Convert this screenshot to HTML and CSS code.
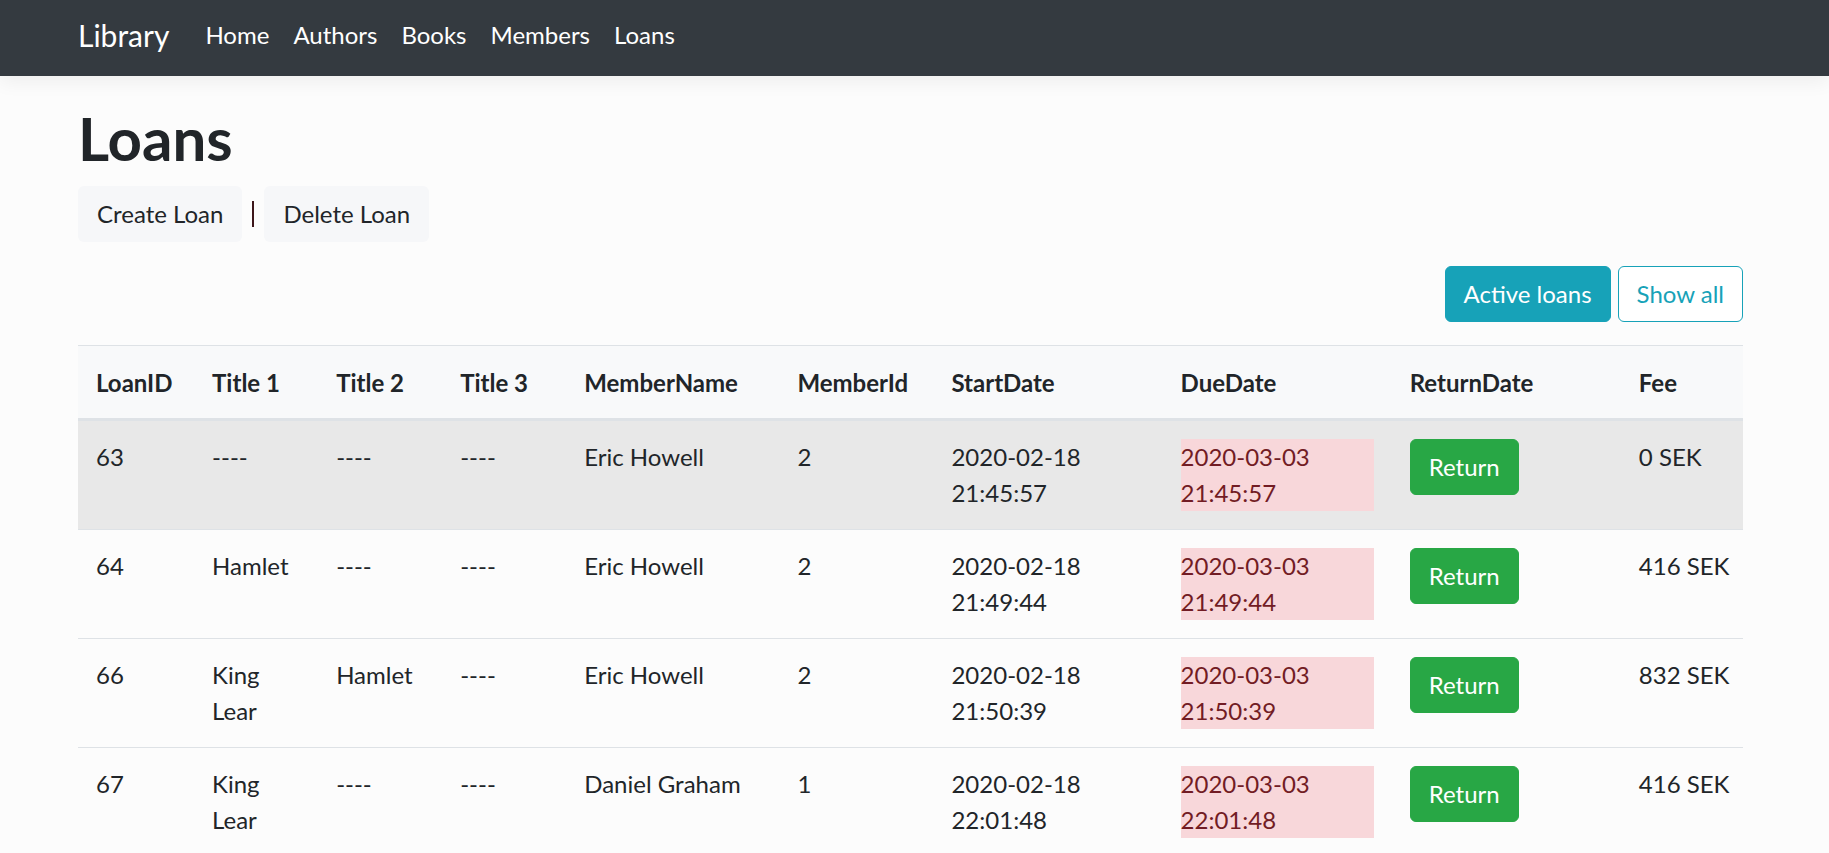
FILE: index.html
```html
<!DOCTYPE html>
<html lang="en">
<head>
<meta charset="utf-8">
<title>Loans - Library</title>
<link rel="stylesheet" href="styles.css">
</head>
<body>
<header class="navbar">
  <a class="brand" href="#">Library</a>
  <nav class="nav">
    <a class="nav-link" href="#">Home</a>
    <a class="nav-link" href="#">Authors</a>
    <a class="nav-link" href="#">Books</a>
    <a class="nav-link" href="#">Members</a>
    <a class="nav-link" href="#">Loans</a>
  </nav>
</header>
<main class="container">
  <h1 class="title">Loans</h1>
  <div class="actions">
    <a class="btn btn-light" href="#">Create Loan</a>
    <span class="sep" aria-hidden="true"></span>
    <a class="btn btn-light" href="#">Delete Loan</a>
  </div>
  <div class="filters">
    <a class="btn btn-info" href="#">Active loans</a>
    <a class="btn btn-outline-info" href="#">Show all</a>
  </div>
  <table class="table">
    <colgroup>
      <col class="c-id"><col class="c-t"><col class="c-t"><col class="c-t">
      <col class="c-name"><col class="c-mid"><col class="c-date"><col class="c-date">
      <col class="c-date"><col class="c-fee">
    </colgroup>
    <thead>
      <tr>
        <th>LoanID</th><th>Title 1</th><th>Title 2</th><th>Title 3</th><th>MemberName</th>
        <th>MemberId</th><th>StartDate</th><th>DueDate</th><th>ReturnDate</th><th>Fee</th>
      </tr>
    </thead>
    <tbody>
      <tr class="hover">
        <td>63</td><td>----</td><td>----</td><td>----</td><td>Eric Howell</td><td>2</td>
        <td>2020-02-18 21:45:57</td>
        <td><div class="overdue">2020-03-03 21:45:57</div></td>
        <td><a class="btn btn-success" href="#">Return</a></td>
        <td class="fee">0 SEK</td>
      </tr>
      <tr>
        <td>64</td><td>Hamlet</td><td>----</td><td>----</td><td>Eric Howell</td><td>2</td>
        <td>2020-02-18 21:49:44</td>
        <td><div class="overdue">2020-03-03 21:49:44</div></td>
        <td><a class="btn btn-success" href="#">Return</a></td>
        <td class="fee">416 SEK</td>
      </tr>
      <tr>
        <td>66</td><td>King Lear</td><td>Hamlet</td><td>----</td><td>Eric Howell</td><td>2</td>
        <td>2020-02-18 21:50:39</td>
        <td><div class="overdue">2020-03-03 21:50:39</div></td>
        <td><a class="btn btn-success" href="#">Return</a></td>
        <td class="fee">832 SEK</td>
      </tr>
      <tr>
        <td>67</td><td>King Lear</td><td>----</td><td>----</td><td>Daniel Graham</td><td>1</td>
        <td>2020-02-18 22:01:48</td>
        <td><div class="overdue">2020-03-03 22:01:48</div></td>
        <td><a class="btn btn-success" href="#">Return</a></td>
        <td class="fee">416 SEK</td>
      </tr>
    </tbody>
  </table>
</main>
</body>
</html>
```
FILE: styles.css
```css
* { box-sizing: border-box; }
html, body { margin: 0; }
body {
  background: #fcfcfc;
  color: #212529;
  font-family: "Lato", "Open Sans", "Liberation Sans", sans-serif;
  font-size: 24px;
  line-height: 1.5;
}
a { text-decoration: none; color: inherit; }

.navbar {
  height: 76px;
  background: #343a40;
  display: flex;
  align-items: center;
  padding: 0 78px 6px;
  box-shadow: 0 6px 18px rgba(0, 0, 0, 0.06);
  position: relative;
}
.brand {
  color: #fff;
  font-size: 30px;
  margin-right: 24px;
  line-height: 1;
}
.nav { display: flex; }
.nav-link {
  color: #fff;
  padding: 0 12px;
  font-size: 24px;
}

.container {
  width: 1665px;
  margin-left: 78px;
  padding-top: 26px;
}
.title {
  font-size: 60px;
  font-weight: 700;
  line-height: 1.2;
  margin: 0 0 12px;
}
.actions {
  display: flex;
  align-items: center;
  gap: 10px;
}
.sep {
  display: block;
  width: 2px;
  height: 26px;
  background: #3d161a;
}
.btn {
  display: inline-block;
  padding: 9px 18px;
  border: 1px solid transparent;
  border-radius: 6px;
  font-size: 24px;
  line-height: 1.5;
  white-space: nowrap;
}
.btn-light { background: #f6f7f9; color: #212529; }
.btn-info { background: #17a2b8; border-color: #17a2b8; color: #fff; }
.btn-outline-info { background: #fff; border-color: #17a2b8; color: #17a2b8; }
.btn-success { background: #28a745; border-color: #28a745; color: #fff; }

.filters {
  display: flex;
  justify-content: flex-end;
  gap: 7px;
  margin: 24px 0 23px;
}

.table {
  width: 100%;
  table-layout: fixed;
  border-collapse: collapse;
}
.c-id { width: 116px; }
.c-t { width: 124px; }
.c-name { width: 213px; }
.c-mid { width: 154px; }
.c-date { width: 229px; }
.c-fee { width: 122px; }
.table th, .table td {
  text-align: left;
  vertical-align: top;
  padding: 18px;
}
.table th {
  background: #f8f9fa;
  font-weight: 700;
  border-top: 1px solid #dee2e6;
  border-bottom: 3px solid #dee2e6;
  padding: 19px 18px 17px;
}
.table td { border-top: 1px solid #dee2e6; }
.table td.fee { white-space: nowrap; }
.table tr.hover td { background: #e8e8e8; }
.overdue {
  background: #f8d7da;
  color: #721c24;
}
```
